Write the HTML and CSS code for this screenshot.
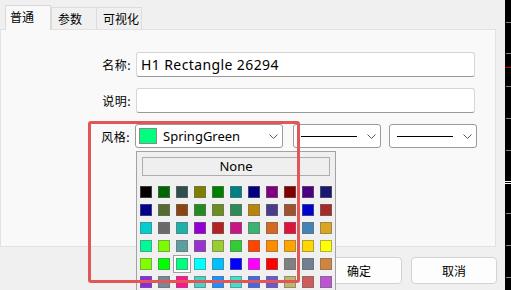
FILE: index.html
```html
<html>
  <head>
    <title>对象属性</title>
    <link rel="stylesheet" href="styles.css">
  </head>
  <body>
	<div class="screen">
		<div class="dialog">
			<div class="tabs">
				<div class="tab active">普通</div>
				<div class="tab">参数</div>
				<div class="tab">可视化</div>
			</div>
			<div class="panel">
				<div class="row">
					<label>名称:</label>
					<div class="field">H1 Rectangle 26294</div>
				</div>
				<div class="row">
					<label>说明:</label>
					<div class="field"></div>
				</div>
				<div class="row style-row">
					<label>风格:</label>
					<div class="combo color-combo">
						<span class="chip"></span>
						<span class="combo-text">SpringGreen</span>
						<svg class="chevron" width="9" height="5" viewBox="0 0 9 5"><polyline points="0.5,0.5 4.5,4.5 8.5,0.5" fill="none" stroke="#5a5a5a" stroke-width="1"/></svg>
					</div>
					<div class="combo line-combo">
						<span class="line"></span>
						<svg class="chevron" width="9" height="5" viewBox="0 0 9 5"><polyline points="0.5,0.5 4.5,4.5 8.5,0.5" fill="none" stroke="#5a5a5a" stroke-width="1"/></svg>
					</div>
					<div class="combo line-combo">
						<span class="line"></span>
						<svg class="chevron" width="9" height="5" viewBox="0 0 9 5"><polyline points="0.5,0.5 4.5,4.5 8.5,0.5" fill="none" stroke="#5a5a5a" stroke-width="1"/></svg>
					</div>
				</div>
			</div>
			<div class="buttons">
				<button>确定</button>
				<button>取消</button>
			</div>

			<!-- colour drop-down, open over the dialog -->
			<div class="popup">
				<div class="none-btn">None</div>
				<div class="swatches" id="swatches"></div>
			</div>
			<div class="highlight"></div>
		</div>
		<div class="axis">
			<svg width="6" height="290">
				<line x1="1" y1="22.5" x2="6" y2="22.5" stroke="#808080"/>
				<line x1="1" y1="53.5" x2="6" y2="53.5" stroke="#808080"/>
				<line x1="0" y1="67.5" x2="6" y2="67.5" stroke="#c00000"/>
				<line x1="1" y1="86.5" x2="6" y2="86.5" stroke="#808080"/>
				<line x1="1" y1="118.5" x2="6" y2="118.5" stroke="#808080"/>
				<line x1="1" y1="150.5" x2="6" y2="150.5" stroke="#808080"/>
				<line x1="0" y1="181.5" x2="6" y2="181.5" stroke="#ffffff"/>
				<line x1="0" y1="183.5" x2="6" y2="183.5" stroke="#ffffff"/>
				<line x1="1" y1="213.5" x2="6" y2="213.5" stroke="#808080"/>
				<line x1="1" y1="245.5" x2="6" y2="245.5" stroke="#808080"/>
				<line x1="1" y1="277.5" x2="6" y2="277.5" stroke="#808080"/>
			</svg>
		</div>
	</div>
    <script>
const colors = [
	'#000000', '#006400', '#2F4F4F', '#808000', '#008000', '#008080', '#000080', '#800080', '#800000', '#4B0082', '#191970',
	'#00008B', '#556B2F', '#8B4513', '#228B22', '#6B8E23', '#2E8B57', '#B8860B', '#483D8B', '#A0522D', '#0000CD', '#A52A2A',
	'#00CED1', '#696969', '#20B2AA', '#9400D3', '#B22222', '#C71585', '#3CB371', '#D2691E', '#DC143C', '#4682B4', '#DAA520',
	'#00FA9A', '#7CFC00', '#5F9EA0', '#9932CC', '#9ACD32', '#32CD32', '#FF4500', '#FF8C00', '#FFA500', '#FFD700', '#FFFF00',
	'#7FFF00', '#00FF00', '#00FF7F', '#00FFFF', '#00BFFF', '#0000FF', '#FF00FF', '#FF0000', '#808080', '#708090', '#CD853F',
	'#8A2BE2', '#778899', '#FF1493', '#48D1CC', '#1E90FF', '#40E0D0', '#4169E1', '#6A5ACD', '#BDB76B', '#CD5C5C', '#BA55D3'
];
const selected = '#00FF7F';
const grid = document.getElementById('swatches');

// Build one cell per colour
colors.forEach((color) => {
	const cell = document.createElement('div');
	cell.className = color === selected ? 'cell selected' : 'cell';
	const swatch = document.createElement('span');
	swatch.className = 'swatch';
	swatch.style.backgroundColor = color;
	cell.appendChild(swatch);
	grid.appendChild(cell);
});
    </script>
  </body>
</html>
```

FILE: styles.css
```css
body {
	margin: 0;
	background-color: #f0f0f0;
	color: #000;
	font-family: 'Noto Sans', 'Noto Sans CJK SC', sans-serif;
	font-size: 13px;
}

.screen {
	display: flex;
	width: 511px;
	height: 290px;
	overflow: hidden;
}

.dialog {
	position: relative;
	width: 505px;
	flex-shrink: 0;
}

.axis {
	width: 6px;
	background-color: #000;
}

.axis svg {
	display: block;
}

/* Tabs */
.tabs {
	display: flex;
	align-items: flex-end;
	height: 24px;
	padding: 5px 0 0 5px;
}

.tab {
	box-sizing: border-box;
	width: 46px;
	height: 22px;
	padding: 2px 0 0 6px;
	border: 1px solid #dcdcdc;
	border-bottom: none;
	background-color: #f0f0f0;
	font-family: 'Noto Sans CJK SC', sans-serif;
	font-size: 12px;
	line-height: 17px;
}

.tab.active {
	position: relative;
	z-index: 1;
	height: 25px;
	margin-bottom: -1px;
	padding: 2px 0 0 4px;
	background-color: #f9f9f9;
	border-color: #d9d9d9;
}

.tab + .tab {
	margin-left: -1px;
}

.tab.active + .tab {
	margin-left: 0;
}

/* Panel */
.panel {
	box-sizing: border-box;
	width: 496px;
	height: 218px;
	padding-top: 22px;
	border: 1px solid #e2e2e2;
	background-color: #f9f9f9;
}

.row {
	display: flex;
	align-items: center;
	margin-bottom: 11px;
}

.row label {
	box-sizing: border-box;
	width: 135px;
	padding-right: 5px;
	text-align: right;
	font-family: 'Noto Sans CJK SC', sans-serif;
	font-size: 12px;
	letter-spacing: 0.5px;
}

.field {
	box-sizing: border-box;
	width: 339px;
	height: 25px;
	padding-left: 4px;
	border: 1px solid #d6d6d6;
	border-bottom-color: #999;
	border-radius: 3px;
	background-color: #fff;
	font-size: 14px;
	letter-spacing: 0.4px;
	line-height: 23px;
}

.style-row {
	margin-top: 1px;
}

.style-row label {
	width: 134px;
}

.combo {
	box-sizing: border-box;
	display: flex;
	align-items: center;
	height: 24px;
	border: 1px solid #9a9a9a;
	border-radius: 3px;
	background-color: #fff;
}

.color-combo {
	width: 148px;
	padding-left: 3px;
}

.chip {
	box-sizing: border-box;
	width: 18px;
	height: 16px;
	border: 1px solid #8a8a8a;
	background-color: #00ff7f;
}

.combo-text {
	margin-left: 6px;
	flex: 1;
}

.chevron {
	margin-right: 4px;
}

.line-combo {
	width: 88px;
	margin-left: 10px;
	padding-left: 7px;
}

.line-combo + .line-combo {
	margin-left: 8px;
}

.line {
	width: 56px;
	height: 1px;
	margin-right: 10px;
	background-color: #000;
}

/* Buttons */
.buttons {
	display: flex;
	justify-content: flex-end;
	gap: 9px;
	margin-top: 10px;
	padding-right: 8px;
}

.buttons button {
	box-sizing: border-box;
	width: 86px;
	height: 27px;
	border: 1px solid #d3d3d3;
	border-radius: 4px;
	background-color: #fdfdfd;
	font-family: 'Noto Sans CJK SC', sans-serif;
	font-size: 12px;
	color: #000;
}

/* Colour drop-down */
.popup {
	position: absolute;
	left: 136px;
	top: 151px;
	z-index: 2;
	box-sizing: border-box;
	width: 200px;
	height: 160px;
	border: 1px solid #a3a3a3;
	background-color: #f0f0f0;
}

.none-btn {
	box-sizing: border-box;
	height: 19px;
	margin: 5px 5px 0 5px;
	border: 1px solid #adadad;
	background-color: #efefef;
	text-align: center;
	line-height: 17px;
}

.swatches {
	display: grid;
	grid-template-columns: repeat(11, 18px);
	grid-auto-rows: 18px;
	margin-top: 7px;
}

.cell {
	box-sizing: border-box;
	display: flex;
	align-items: center;
	justify-content: center;
}

.cell.selected {
	border: 1px solid #a0a0a0;
	background-color: #fff;
}

.swatch {
	box-sizing: border-box;
	width: 12px;
	height: 12px;
	border: 1px solid rgba(110, 110, 110, 0.55);
}

.highlight {
	position: absolute;
	left: 88px;
	top: 121px;
	z-index: 3;
	box-sizing: border-box;
	width: 212px;
	height: 162px;
	border: 3.5px solid #e35656;
	border-radius: 3px;
}
```
